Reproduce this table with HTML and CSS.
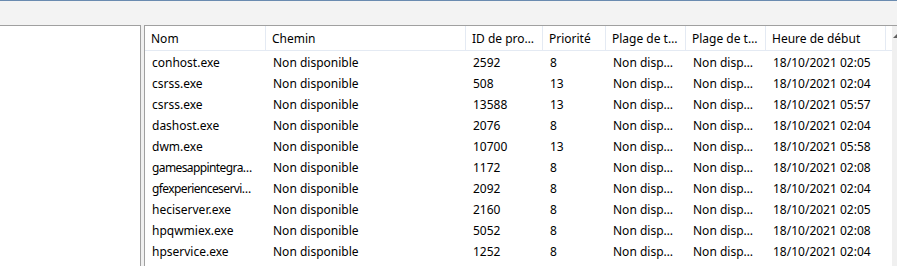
FILE: index.html
```html
<!DOCTYPE html>
<html lang="fr">
<head>
<meta charset="utf-8">
<title>Processus</title>
<link rel="stylesheet" href="styles.css">
</head>
<body>
<div class="topline"></div>
<div class="toolbar"></div>
<div class="main">
  <div class="tree"></div>
  <div class="listpanel">
    <div class="list">
      <div class="row head">
        <div class="cell">Nom</div>
        <div class="cell">Chemin</div>
        <div class="cell">ID de pro…</div>
        <div class="cell">Priorité</div>
        <div class="cell">Plage de t…</div>
        <div class="cell">Plage de t…</div>
        <div class="cell">Heure de début</div>
      </div>
      <div class="row"><div class="cell">conhost.exe</div><div class="cell">Non disponible</div><div class="cell">2592</div><div class="cell">8</div><div class="cell">Non disp…</div><div class="cell">Non disp…</div><div class="cell">18/10/2021 02:05</div></div>
      <div class="row"><div class="cell">csrss.exe</div><div class="cell">Non disponible</div><div class="cell">508</div><div class="cell">13</div><div class="cell">Non disp…</div><div class="cell">Non disp…</div><div class="cell">18/10/2021 02:04</div></div>
      <div class="row"><div class="cell">csrss.exe</div><div class="cell">Non disponible</div><div class="cell">13588</div><div class="cell">13</div><div class="cell">Non disp…</div><div class="cell">Non disp…</div><div class="cell">18/10/2021 05:57</div></div>
      <div class="row"><div class="cell">dashost.exe</div><div class="cell">Non disponible</div><div class="cell">2076</div><div class="cell">8</div><div class="cell">Non disp…</div><div class="cell">Non disp…</div><div class="cell">18/10/2021 02:04</div></div>
      <div class="row"><div class="cell">dwm.exe</div><div class="cell">Non disponible</div><div class="cell">10700</div><div class="cell">13</div><div class="cell">Non disp…</div><div class="cell">Non disp…</div><div class="cell">18/10/2021 05:58</div></div>
      <div class="row"><div class="cell tight">gamesappintegra…</div><div class="cell">Non disponible</div><div class="cell">1172</div><div class="cell">8</div><div class="cell">Non disp…</div><div class="cell">Non disp…</div><div class="cell">18/10/2021 02:08</div></div>
      <div class="row"><div class="cell tight">gfexperienceservi…</div><div class="cell">Non disponible</div><div class="cell">2092</div><div class="cell">8</div><div class="cell">Non disp…</div><div class="cell">Non disp…</div><div class="cell">18/10/2021 02:04</div></div>
      <div class="row"><div class="cell">heciserver.exe</div><div class="cell">Non disponible</div><div class="cell">2160</div><div class="cell">8</div><div class="cell">Non disp…</div><div class="cell">Non disp…</div><div class="cell">18/10/2021 02:05</div></div>
      <div class="row"><div class="cell">hpqwmiex.exe</div><div class="cell">Non disponible</div><div class="cell">5052</div><div class="cell">8</div><div class="cell">Non disp…</div><div class="cell">Non disp…</div><div class="cell">18/10/2021 02:08</div></div>
      <div class="row"><div class="cell">hpservice.exe</div><div class="cell">Non disponible</div><div class="cell">1252</div><div class="cell">8</div><div class="cell">Non disp…</div><div class="cell">Non disp…</div><div class="cell">18/10/2021 02:04</div></div>
    </div>
    <div class="scrollbar"><div class="arrow"></div></div>
  </div>
</div>
</body>
</html>
```
FILE: styles.css
```css
html, body {
  margin: 0;
  padding: 0;
  overflow: hidden;
}
body {
  width: 897px;
  height: 266px;
  background: #f0f0f0;
  font-family: "Noto Sans", "Segoe UI", sans-serif;
  font-size: 12px;
  color: #000;
}
.topline {
  height: 1px;
  background: #6a8bb0;
}
.toolbar {
  height: 24px;
  background: #f3f3f3;
}
.main {
  display: flex;
  gap: 3px;
  height: 241px;
}
.tree {
  width: 141px;
  flex-shrink: 0;
  box-sizing: border-box;
  background: #fff;
  border-top: 1px solid #a0a0a0;
  border-right: 1px solid #a0a0a0;
}
.listpanel {
  flex-shrink: 0;
  display: flex;
  background: #fff;
  border-top: 1px solid #a0a0a0;
  border-left: 1px solid #a0a0a0;
}
.list {
  width: 747px;
  flex-shrink: 0;
}
.row {
  display: grid;
  grid-template-columns: 121px 200px 77px 63px 80px 80px 120px;
  height: 21px;
}
.row.head {
  height: 24px;
  border-bottom: 1px solid #e4eaf3;
}
.cell {
  padding: 2px 1px 0 7px;
  line-height: 19px;
  white-space: nowrap;
  overflow: hidden;
  min-width: 0;
}
.cell.tight {
  letter-spacing: -0.6px;
  padding-right: 0;
}
.head .cell {
  padding-left: 6px;
  line-height: 22px;
  border-right: 1px solid #e4eaf3;
}
.scrollbar {
  width: 17px;
  flex-shrink: 0;
  background: #f0f0f0;
  position: relative;
}
.arrow {
  position: absolute;
  top: 8px;
  left: 1px;
  width: 0;
  height: 0;
  border-left: 4px solid transparent;
  border-right: 4px solid transparent;
  border-bottom: 4px solid #606060;
}
```
